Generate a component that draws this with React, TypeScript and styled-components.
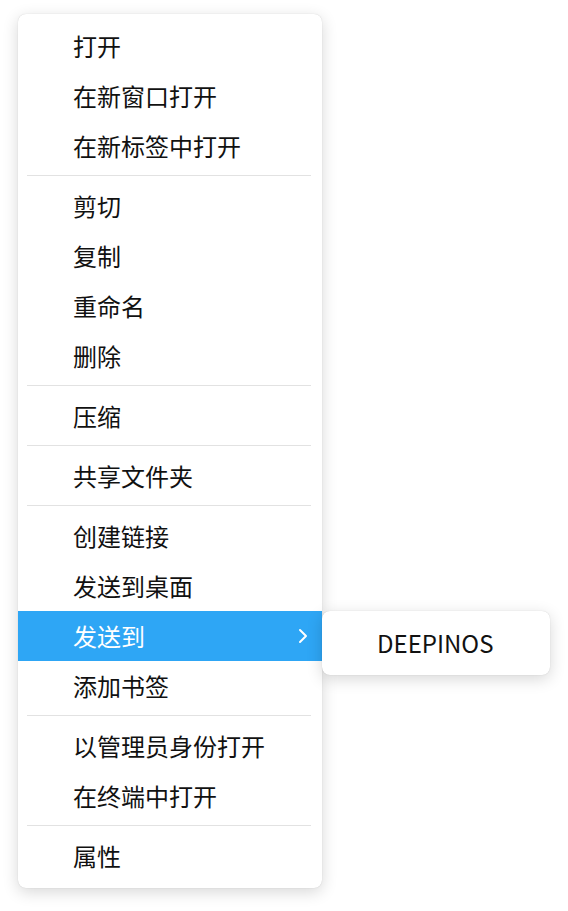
import React from 'react';
import styled, { createGlobalStyle } from 'styled-components';

const GlobalStyle = createGlobalStyle`
  html, body {
    margin: 0;
    padding: 0;
    background: #ffffff;
  }
  body {
    font-family: "Noto Sans CJK SC", "Noto Sans", sans-serif;
    color: #111111;
  }
`;

const Page = styled.div`
  width: 568px;
  height: 911px;
  padding: 14px 0 0 18px;
  box-sizing: border-box;
  display: flex;
  align-items: flex-start;
`;

const Menu = styled.div<{ $width: number }>`
  width: ${p => p.$width}px;
  box-sizing: border-box;
  padding: 7px 0;
  background: #ffffff;
  border-radius: 8px;
  box-shadow: 0 4px 16px rgba(0, 0, 0, 0.16), 0 0 1px rgba(0, 0, 0, 0.2);
  display: flex;
  flex-direction: column;
`;

const SubmenuWrap = styled.div`
  margin-top: 597px;
  position: relative;
  z-index: 2;
`;

const Item = styled.div<{ $active?: boolean }>`
  height: 50px;
  display: flex;
  align-items: center;
  padding: 0 13px 0 55px;
  font-size: 24px;
  line-height: 1;
  background: ${p => (p.$active ? '#2ea6f5' : 'transparent')};
  color: ${p => (p.$active ? '#ffffff' : '#111111')};
`;

const Label = styled.span`
  flex: 1;
  white-space: nowrap;
`;

const Separator = styled.div`
  height: 1px;
  margin: 4px 11px 5px 9px;
  background: #e2e2e2;
`;

const Chevron = () => (
  <svg width="12" height="18" viewBox="0 0 12 18" fill="none">
    <path d="M3 3 L9 9 L3 15" stroke="#ffffff" strokeWidth="2" strokeLinecap="round" strokeLinejoin="round" />
  </svg>
);

const groups: string[][] = [
  ['打开', '在新窗口打开', '在新标签中打开'],
  ['剪切', '复制', '重命名', '删除'],
  ['压缩'],
  ['共享文件夹'],
  ['创建链接', '发送到桌面', '发送到', '添加书签'],
  ['以管理员身份打开', '在终端中打开'],
  ['属性'],
];

export default function App() {
  return (
    <>
      <GlobalStyle />
      <Page>
        <Menu $width={304}>
          {groups.map((group, gi) => (
            <React.Fragment key={gi}>
              {gi > 0 && <Separator />}
              {group.map(label => {
                const active = label === '发送到';
                return (
                  <Item key={label} $active={active}>
                    <Label>{label}</Label>
                    {active && <Chevron />}
                  </Item>
                );
              })}
            </React.Fragment>
          ))}
        </Menu>
        <SubmenuWrap>
          <Menu $width={228}>
            <Item>
              <Label>DEEPINOS</Label>
            </Item>
          </Menu>
        </SubmenuWrap>
      </Page>
    </>
  );
}
